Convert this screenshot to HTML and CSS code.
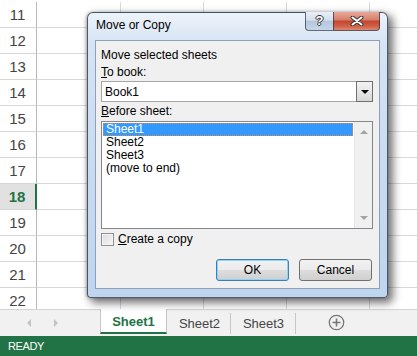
FILE: index.html
```html
<!DOCTYPE html>
<html>
<head>
  <title>Move or Copy</title>
  <link rel="stylesheet" href="styles.css">
</head>
<body>

<div class="sheet">
  <div class="grid">
    <div class="row"><div class="rowhead">11</div><div class="cell"></div><div class="cell"></div><div class="cell"></div><div class="cell"></div><div class="cell"></div></div>
    <div class="row"><div class="rowhead">12</div><div class="cell"></div><div class="cell"></div><div class="cell"></div><div class="cell"></div><div class="cell"></div></div>
    <div class="row"><div class="rowhead">13</div><div class="cell"></div><div class="cell"></div><div class="cell"></div><div class="cell"></div><div class="cell"></div></div>
    <div class="row"><div class="rowhead">14</div><div class="cell"></div><div class="cell"></div><div class="cell"></div><div class="cell"></div><div class="cell"></div></div>
    <div class="row"><div class="rowhead">15</div><div class="cell"></div><div class="cell"></div><div class="cell"></div><div class="cell"></div><div class="cell"></div></div>
    <div class="row"><div class="rowhead">16</div><div class="cell"></div><div class="cell"></div><div class="cell"></div><div class="cell"></div><div class="cell"></div></div>
    <div class="row"><div class="rowhead">17</div><div class="cell"></div><div class="cell"></div><div class="cell"></div><div class="cell"></div><div class="cell"></div></div>
    <div class="row selected"><div class="rowhead">18</div><div class="cell"></div><div class="cell"></div><div class="cell"></div><div class="cell"></div><div class="cell"></div></div>
    <div class="row"><div class="rowhead">19</div><div class="cell"></div><div class="cell"></div><div class="cell"></div><div class="cell"></div><div class="cell"></div></div>
    <div class="row"><div class="rowhead">20</div><div class="cell"></div><div class="cell"></div><div class="cell"></div><div class="cell"></div><div class="cell"></div></div>
    <div class="row"><div class="rowhead">21</div><div class="cell"></div><div class="cell"></div><div class="cell"></div><div class="cell"></div><div class="cell"></div></div>
    <div class="row"><div class="rowhead">22</div><div class="cell"></div><div class="cell"></div><div class="cell"></div><div class="cell"></div><div class="cell"></div></div>
  </div>

  <div class="tabbar">
    <div class="tabnav">
      <span class="navarrow left"></span>
      <span class="navarrow right"></span>
    </div>
    <div class="tab active">Sheet1</div>
    <div class="tab tab2">Sheet2</div>
    <span class="tabsep"></span>
    <div class="tab tab3">Sheet3</div>
    <span class="tabsep"></span>
    <div class="addsheet">
      <svg width="17" height="17" viewBox="0 0 17 17">
        <circle cx="8.5" cy="8.5" r="7.2" fill="none" stroke="#777" stroke-width="1.3"/>
        <path d="M8.5 4.5v8M4.5 8.5h8" stroke="#777" stroke-width="1.6"/>
      </svg>
    </div>
  </div>

  <div class="status">READY</div>
</div>

<div class="dialog">
  <div class="titlebar">Move or Copy</div>
  <div class="caption-buttons">
    <div class="cap-help">?</div>
    <div class="cap-close">
      <svg width="14" height="10" viewBox="0 0 14 10">
        <path d="M2.5 1.5l9 7M11.5 1.5l-9 7" stroke="#3a3a3a" stroke-width="4" stroke-linecap="round"/>
        <path d="M2.5 1.5l9 7M11.5 1.5l-9 7" stroke="#fff" stroke-width="2" stroke-linecap="round"/>
      </svg>
    </div>
  </div>

  <div class="client">
    <div class="label">Move selected sheets</div>
    <div class="label"><u>T</u>o book:</div>
    <div class="combo">
      <span class="combo-text">Book1</span>
      <span class="combo-btn"><span class="tri"></span></span>
    </div>
    <div class="label label-list"><u>B</u>efore sheet:</div>
    <div class="listbox">
      <div class="items">
        <div class="item current">Sheet1</div>
        <div class="item">Sheet2</div>
        <div class="item">Sheet3</div>
        <div class="item">(move to end)</div>
      </div>
      <div class="scrollbar">
        <span class="sb-up"></span>
        <span class="sb-down"></span>
      </div>
    </div>
    <div class="check-row">
      <span class="checkbox"></span>
      <span><u>C</u>reate a copy</span>
    </div>
    <div class="buttons">
      <button class="btn default">OK</button>
      <button class="btn">Cancel</button>
    </div>
  </div>
</div>

</body>
</html>
```

FILE: styles.css
```css
body {
  margin: 0;
  overflow: hidden;
  font-family: "Liberation Sans", Arial, sans-serif;
  background: #fff;
}
.sheet {
  width: 417px;
  height: 356px;
  display: flex;
  flex-direction: column;
  overflow: hidden;
}

/* grid */
.grid {
  height: 309px;
  padding-top: 2px;
  box-sizing: border-box;
  overflow: hidden;
}
.row {
  display: grid;
  grid-template-columns: 37px 84px 83px 83px 83px 83px;
  height: 26px;
}
.rowhead {
  box-sizing: border-box;
  border-right: 1px solid #b8b8b8;
  border-bottom: 1px solid #d6d6d6;
  font-size: 15px;
  color: #444;
  text-align: center;
  line-height: 25px;
  padding-right: 1px;
}
.cell {
  box-sizing: border-box;
  border-right: 1px solid #d9d9d9;
  border-bottom: 1px solid #d9d9d9;
}
.row.selected .rowhead {
  background: #e1e1e1;
  color: #217346;
  font-weight: bold;
  border-right: 2px solid #217346;
}

/* sheet tabs */
.tabbar {
  height: 27px;
  box-sizing: border-box;
  background: #f1f1f1;
  border-top: 1px solid #d4d4d4;
  display: flex;
  align-items: stretch;
  font-size: 13px;
  color: #444;
}
.tabnav {
  width: 100px;
  display: flex;
  align-items: center;
  padding-left: 27px;
  box-sizing: border-box;
  gap: 23px;
}
.navarrow {
  width: 0;
  height: 0;
  border-top: 4px solid transparent;
  border-bottom: 4px solid transparent;
}
.navarrow.left {
  border-right: 4px solid #c3c3c3;
}
.navarrow.right {
  border-left: 4px solid #c3c3c3;
}
.tab {
  display: flex;
  align-items: center;
  justify-content: center;
}
.tab.active {
  width: 67px;
  box-sizing: border-box;
  margin-top: -1px;
  height: 25px;
  background: #fff;
  border-left: 1px solid #c6c6c6;
  border-right: 1px solid #c6c6c6;
  border-bottom: 2px solid #217346;
  color: #217346;
  font-weight: bold;
  padding-top: 1px;
}
.tab2 {
  width: 63px;
  padding-left: 2px;
  box-sizing: border-box;
}
.tab3 {
  width: 64px;
  padding-left: 1px;
  box-sizing: border-box;
}
.tabsep {
  width: 1px;
  height: 21px;
  margin-top: 3px;
  background: #c6c6c6;
}
.addsheet {
  margin-left: 32px;
  display: flex;
  align-items: center;
  padding-bottom: 1px;
}

.status {
  height: 20px;
  background: #217346;
  color: #fff;
  font-size: 11px;
  letter-spacing: -0.4px;
  line-height: 21px;
  padding-left: 8px;
}

/* dialog */
.dialog {
  position: absolute;
  left: 87px;
  top: 12px;
  width: 301px;
  box-sizing: border-box;
  padding: 0 7px 8px 7px;
  border: 1px solid rgba(30, 40, 55, 0.75);
  border-radius: 6px 6px 4px 4px;
  background: linear-gradient(#edf3fa, #d6e4f3 30px, #c7daf0 60%, #c0d5ee);
  box-shadow: 4px 4px 9px 1px rgba(0, 0, 0, 0.55), -1px 0 3px rgba(0, 0, 0, 0.25);
  font-size: 12px;
  color: #000;
}
.titlebar {
  height: 24px;
  padding-top: 3px;
  line-height: 18px;
  padding-left: 1px;
}
.caption-buttons {
  position: absolute;
  top: -1px;
  right: 7px;
  display: flex;
}
.cap-help,
.cap-close {
  height: 19px;
  box-sizing: border-box;
  border: 1px solid rgba(40, 50, 70, 0.7);
  border-top: none;
  display: flex;
  align-items: center;
  justify-content: center;
}
.cap-help {
  width: 28px;
  border-right: none;
  border-radius: 0 0 0 4px;
  background: linear-gradient(#e9eff7, #d3dfed 45%, #b7c7db 52%, #c6d6ea);
  color: #fff;
  font-weight: bold;
  font-size: 13px;
  text-shadow: 1px 0 0 #333, -1px 0 0 #333, 0 1px 0 #333, 0 -1px 0 #333;
  padding-bottom: 1px;
}
.cap-close {
  width: 47px;
  border-radius: 0 0 4px 0;
  background: linear-gradient(#e8a797, #d7826f 42%, #c4462f 52%, #d0624a 80%, #dd8a72);
}

.client {
  border: 1px solid #8ca1bb;
  background: #f0f0f0;
  padding: 6px 6px 7px 5px;
}
.label {
  line-height: 17px;
}
.label-list {
  line-height: 19px;
}
.combo {
  height: 21px;
  box-sizing: border-box;
  border: 1px solid #a6a6a6;
  background: #fff;
  display: flex;
  align-items: center;
  justify-content: space-between;
}
.combo-text {
  padding-left: 3px;
}
.combo-btn {
  width: 17px;
  height: 21px;
  margin: 0 -1px 0 0;
  box-sizing: border-box;
  border: 1px solid #707070;
  background: linear-gradient(#f3f3f3, #e6e6e6 50%, #d8d8d8);
  display: flex;
  align-items: center;
  justify-content: center;
}
.tri {
  width: 0;
  height: 0;
  border-left: 4px solid transparent;
  border-right: 4px solid transparent;
  border-top: 4px solid #000;
  margin-top: 1px;
}
.listbox {
  height: 108px;
  box-sizing: border-box;
  border: 1px solid #828790;
  background: #fff;
  display: flex;
}
.items {
  flex: 1;
  padding: 1px 1px 0 1px;
}
.item {
  height: 13px;
  line-height: 13px;
  padding-left: 3px;
}
.item.current {
  box-sizing: border-box;
  padding-left: 2px;
  line-height: 11px;
  background: #3399ff;
  color: #fff;
  border: 1px dotted #e0883a;
}
.scrollbar {
  width: 17px;
  background: #f0f0f0;
  border-left: 1px solid #e6e6e6;
  display: flex;
  flex-direction: column;
  justify-content: space-between;
  align-items: center;
  padding: 8px 0 8px 0;
}
.sb-up,
.sb-down {
  width: 0;
  height: 0;
  border-left: 4px solid transparent;
  border-right: 4px solid transparent;
}
.sb-up {
  border-bottom: 4px solid #a3a3a3;
}
.sb-down {
  border-top: 4px solid #a3a3a3;
}
.check-row {
  margin-top: 4px;
  height: 13px;
  display: flex;
  align-items: center;
  gap: 4px;
  line-height: 13px;
}
.checkbox {
  width: 13px;
  height: 13px;
  box-sizing: border-box;
  border: 1px solid #8e8f8f;
  background: linear-gradient(135deg, #dcdcdc, #f6f6f6);
  box-shadow: inset 0 0 0 1px #f4f4f4;
}
.buttons {
  margin-top: 13px;
  display: flex;
  justify-content: flex-end;
  gap: 10px;
  padding-right: 1px;
}
.btn {
  width: 73px;
  height: 22px;
  border: 1px solid #707070;
  border-radius: 3px;
  background: linear-gradient(#f2f2f2, #ebebeb 48%, #dddddd 52%, #cfcfcf);
  font-family: "Liberation Sans", Arial, sans-serif;
  font-size: 12px;
  color: #000;
  padding: 0;
}
.btn.default {
  border-color: #3c7fb1;
  box-shadow: inset 0 0 0 1px #8ed3f4;
}
```
